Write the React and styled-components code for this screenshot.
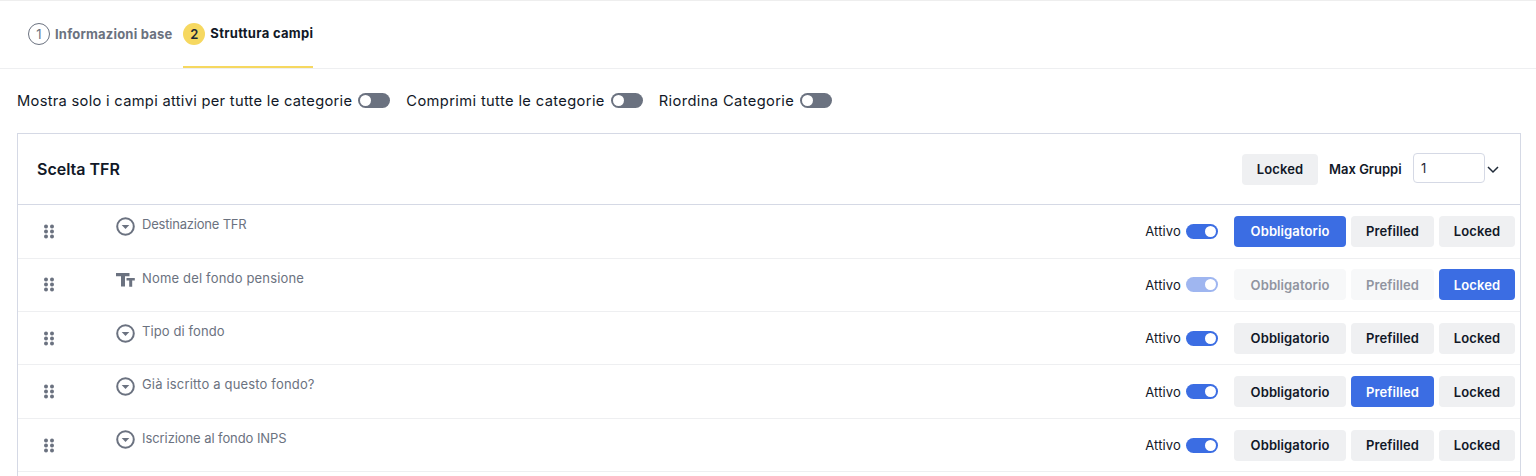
import React from "react";
import styled, { createGlobalStyle } from "styled-components";

const Global = createGlobalStyle`
  html, body { margin: 0; padding: 0; background: #fff; overflow: hidden; }
  body { font-family: Inter, "Noto Sans", sans-serif; color: #111827; }
`;
const Page = styled.div`
  width: 1536px; height: 476px; overflow: hidden; border-top: 1px solid #eeeeee; box-sizing: border-box;
`;
const Tabs = styled.div`
  height: 68px; box-sizing: border-box; border-bottom: 1px solid #eeeff1; display: flex; padding-left: 28px; gap: 11px;
`;
const Tab = styled.div`
  height: 67px; box-sizing: border-box; display: flex; align-items: flex-start; gap: 5px; padding-top: 22px;
  border-bottom: 2px solid ${p => (p.$active ? "#f6d860" : "transparent")}; margin-bottom: -1px;
`;
const Step = styled.span`
  width: 22px; height: 22px; box-sizing: border-box; border-radius: 50%; display: flex; align-items: center; justify-content: center;
  font-size: 13px; font-weight: ${p => (p.$active ? 600 : 400)};
  background: ${p => (p.$active ? "#f6d860" : "#fff")}; color: ${p => (p.$active ? "#1f2937" : "#6b7280")};
  border: ${p => (p.$active ? "none" : "1px solid #6b7280")};
`;
const TabLabel = styled.span`
  font-size: 13px; line-height: 22px; font-weight: 700; letter-spacing: ${p => (p.$active ? "0.3px" : "0.2px")}; margin-top: ${p => (p.$active ? "-1px" : "0")};
  color: ${p => (p.$active ? "#111827" : "#6b7280")};
`;
const Options = styled.div`
  display: flex; align-items: center; height: 64px; padding-left: 17px; padding-bottom: 1px; box-sizing: border-box; gap: 16px;
`;
const Option = styled.div`
  display: flex; align-items: center; gap: 6px; font-size: 14.7px; color: #111827; letter-spacing: ${p => p.$ls}px; white-space: nowrap;
`;
const Switch = styled.span`
  width: 32px; height: 15px; border-radius: 8px; display: flex; align-items: center; box-sizing: border-box; padding: 0 1px;
  border: 1px solid transparent; flex: none;
  background: ${p => (p.$on ? (p.$dim ? "#9fb6f0" : "#3b6de3") : "#6b7280")};
  justify-content: ${p => (p.$on ? "flex-end" : "flex-start")};
  &::after { content: ""; width: 11px; height: 11px; border-radius: 50%; background: #fff; }
`;
const Card = styled.section`
  margin-left: 17px; width: 1504px; height: 400px; box-sizing: border-box; border: 1px solid #d5d9e5;
`;
const CardHead = styled.header`
  height: 71.3px; box-sizing: border-box; display: flex; align-items: center; padding: 0 19px; border-bottom: 1px solid #d5d9e5;
`;
const Title = styled.h2`
  margin: 0; font-size: 16px; font-weight: 600; color: #111827; flex: 1;
`;
const Btn = styled.button`
  height: 31px; border: none; border-radius: 4px; padding: 0; font-family: inherit; font-size: 13px; font-weight: 600; letter-spacing: 0.1px;
  width: ${p => p.$w}px; flex: none;
  background: ${p => (p.$active ? "#3b6de3" : p.$dim ? "#f7f8f9" : "#eff0f2")};
  color: ${p => (p.$active ? "#fff" : p.$dim ? "#9094a0" : "#111827")};
`;
const MaxLabel = styled.span`
  margin-left: 11px; font-size: 13px; font-weight: 600; color: #111827; width: 84px; white-space: nowrap;
`;
const Select = styled.div`
  width: 72px; height: 30px; box-sizing: border-box; border: 1px solid #d5d9e5; border-radius: 4px; font-size: 13px; padding-left: 7px;
  display: flex; align-items: center; margin-top: -2px; color: #1f2937;
`;
const Chevron = styled.svg`
  width: 14px; height: 14px; flex: none; margin-left: 1px; margin-right: 1px;
`;
const Row = styled.div`
  height: 53.4px; box-sizing: border-box; display: flex; align-items: center; border-bottom: 1px solid #eeeff1; padding-right: 5px;
`;
const Drag = styled.svg`
  width: 10px; height: 15px; margin-left: 26px; flex: none; color: #6b7280;
`;
const FieldName = styled.div`
  margin-left: 62px; display: flex; align-items: flex-start; gap: 7px; flex: 1; align-self: flex-start; padding-top: 11px;
  font-size: 13px; color: #6b7280;
`;
const IconSlot = styled.span`
  width: 19px; height: 20px; display: flex; align-items: center; justify-content: center; flex: none; color: #6b7280;
`;
const FieldText = styled.span`
  line-height: 16px; letter-spacing: ${p => p.$ls}px;
`;
const Active = styled.div`
  display: flex; align-items: center; gap: 5px; font-size: 13px; letter-spacing: 0.15px; color: #111827; margin-right: 16px;
`;
const Btns = styled.div` display: flex; gap: 5px; `;

const DragIcon = () => (
  <Drag viewBox="0 0 10 15" fill="currentColor">
    {[2.5, 7.5, 12.5].flatMap(y => [2, 8].map(x => <circle key={`${x}${y}`} cx={x} cy={y} r="2" />))}
  </Drag>
);
const Dropdown = () => (
  <svg width="19" height="19" viewBox="0 0 19 19">
    <circle cx="9.5" cy="9.5" r="8.3" fill="none" stroke="currentColor" strokeWidth="2" />
    <path d="M5.7 8h7.6l-3.8 4z" fill="currentColor" />
  </svg>
);
const TextIcon = () => (
  <svg width="19" height="16" viewBox="0 0 19 16" fill="currentColor">
    <path d="M0 1h13.5v3.2H9V14.5H5V4.2H0z" />
    <path d="M10.5 6h8.3v2.4h-2.6v6.3h-3V8.4h-2.7z" />
  </svg>
);

const rows = [
  { name: "Destinazione TFR", icon: "d", active: "O", ls: -0.2 },
  { name: "Nome del fondo pensione", icon: "t", active: "L", dim: true, ls: 0.17 },
  { name: "Tipo di fondo", icon: "d", ls: 0.1 },
  { name: "Già iscritto a questo fondo?", icon: "d", active: "P", ls: 0.17 },
  { name: "Iscrizione al fondo INPS", icon: "d", ls: -0.08 },
];

export default function App() {
  return (
    <Page>
      <Global />
      <Tabs>
        <Tab>
          <Step>1</Step>
          <TabLabel>Informazioni base</TabLabel>
        </Tab>
        <Tab $active>
          <Step $active>2</Step>
          <TabLabel $active>Struttura campi</TabLabel>
        </Tab>
      </Tabs>
      <Options>
        <Option $ls={0.29}>Mostra solo i campi attivi per tutte le categorie<Switch /></Option>
        <Option $ls={0.37}>Comprimi tutte le categorie<Switch /></Option>
        <Option $ls={0.38}>Riordina Categorie<Switch /></Option>
      </Options>
      <Card>
        <CardHead>
          <Title>Scelta TFR</Title>
          <Btn $w={76}>Locked</Btn>
          <MaxLabel>Max Gruppi</MaxLabel>
          <Select>1</Select>
          <Chevron viewBox="0 0 14 14" fill="none" stroke="#1f2937" strokeWidth="1.5"><path d="M2 5l5 5 5-5" /></Chevron>
        </CardHead>
        {rows.map(r => (
          <Row key={r.name}>
            <DragIcon />
            <FieldName>
              <IconSlot>{r.icon === "d" ? <Dropdown /> : <TextIcon />}</IconSlot>
              <FieldText $ls={r.ls}>{r.name}</FieldText>
            </FieldName>
            <Active>Attivo<Switch $on $dim={r.dim} /></Active>
            <Btns>
              <Btn $w={112} $active={r.active === "O"} $dim={r.dim}>Obbligatorio</Btn>
              <Btn $w={83} $active={r.active === "P"} $dim={r.dim}>Prefilled</Btn>
              <Btn $w={76} $active={r.active === "L"}>Locked</Btn>
            </Btns>
          </Row>
        ))}
      </Card>
    </Page>
  );
}
